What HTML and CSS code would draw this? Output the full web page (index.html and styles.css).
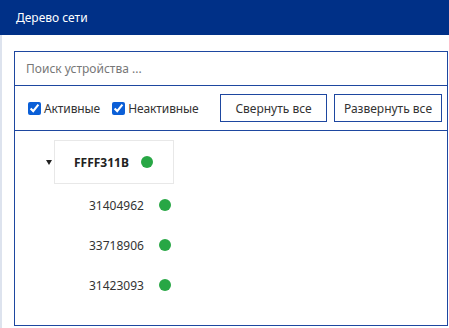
FILE: index.html
```html
<!DOCTYPE html>
<html lang="ru">
<head>
    <meta charset="UTF-8">
    <meta name="viewport" content="width=device-width, initial-scale=1.0">
    <title>Дерево сети</title>
    <link rel="stylesheet" href="styles.css">
</head>
<body>
    <div class="header">Дерево сети</div>
    <div class="content">
        <div class="panel">
            <div class="search-row">
                <input type="text" class="search" placeholder="Поиск устройства ...">
            </div>
            <div class="controls">
                <label class="check"><input type="checkbox" checked> Активные</label>
                <label class="check"><input type="checkbox" checked> Неактивные</label>
                <div class="buttons">
                    <button class="btn btn-collapse">Свернуть все</button>
                    <button class="btn btn-expand">Развернуть все</button>
                </div>
            </div>
            <div class="tree">
                <div class="root-row">
                    <span class="caret"></span>
                    <div class="root-node">
                        <span class="root-name">FFFF311B</span>
                        <span class="dot"></span>
                    </div>
                </div>
                <ul class="children">
                    <li><span class="name">31404962</span><span class="dot"></span></li>
                    <li><span class="name">33718906</span><span class="dot"></span></li>
                    <li><span class="name">31423093</span><span class="dot"></span></li>
                </ul>
            </div>
        </div>
    </div>
</body>
</html>
```

FILE: styles.css
```css
* {
    box-sizing: border-box;
    margin: 0;
    padding: 0;
}
body {
    font-family: 'Noto Sans', 'Open Sans', sans-serif;
    font-size: 12px;
    color: #333;
    background: white;
    width: 449px;
    height: 328px;
    overflow: hidden;
}
.header {
    height: 35px;
    background: #003087;
    color: white;
    padding-left: 16px;
    display: flex;
    align-items: center;
    font-size: 12px;
}
.content {
    border-left: 2px solid #dde3ee;
    padding: 16px 1px 0 12px;
    height: 293px;
}
.panel {
    border: 1px solid #1e47a0;
    height: 275px;
    display: flex;
    flex-direction: column;
}
.search-row {
    height: 34px;
    border-bottom: 1px solid #1e47a0;
    display: flex;
    align-items: center;
}
.search {
    width: 100%;
    border: none;
    outline: none;
    padding-left: 11px;
    font-family: inherit;
    font-size: 12px;
    color: #333;
    background: transparent;
}
.search::placeholder {
    color: #777;
}
.controls {
    height: 45px;
    border-bottom: 1px solid #1e47a0;
    display: flex;
    align-items: center;
    padding: 0 5px 0 13px;
}
.check {
    display: flex;
    align-items: center;
    gap: 3px;
    margin-right: 12px;
    color: #333;
    font-size: 12px;
    letter-spacing: -0.1px;
}
.check input {
    width: 13px;
    height: 13px;
    accent-color: #0b5fd7;
}
.buttons {
    margin-left: auto;
    display: flex;
    gap: 7px;
}
.btn {
    height: 28px;
    border: 1px solid #1e47a0;
    background: white;
    color: #333;
    font-family: inherit;
    font-size: 12px;
}
.btn-collapse { width: 107px; }
.btn-expand { width: 108px; }
.tree {
    padding: 9px 0 0 31px;
}
.root-row {
    display: flex;
    align-items: center;
}
.caret {
    width: 0;
    height: 0;
    border-left: 3.5px solid transparent;
    border-right: 3.5px solid transparent;
    border-top: 5px solid #222;
    margin-right: 2px;
}
.root-node {
    width: 120px;
    height: 44px;
    border: 1px solid #e8e8e8;
    display: flex;
    align-items: center;
    padding-left: 19px;
}
.root-name {
    font-weight: bold;
    color: #222;
    width: 67px;
}
.dot {
    width: 12px;
    height: 12px;
    border-radius: 50%;
    background: #28a745;
    display: inline-block;
}
.children {
    list-style: none;
    padding-left: 43px;
    margin-top: 1px;
}
.children li {
    height: 40px;
    display: flex;
    align-items: center;
}
.children .name {
    width: 70px;
    color: #333;
}
```
